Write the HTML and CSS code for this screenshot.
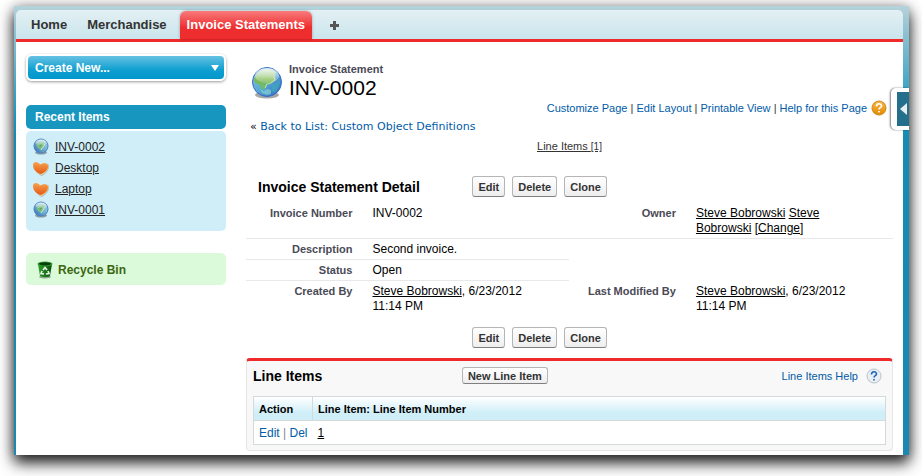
FILE: index.html
```html
<!DOCTYPE html>
<html lang="en">
<head>
<meta charset="utf-8">
<title>Invoice Statement: INV-0002</title>
<link rel="stylesheet" href="styles.css">
</head>
<body>
<svg class="defs" width="0" height="0" aria-hidden="true">
  <defs>
    <linearGradient id="sea" x1="0" y1="0" x2="1" y2="1">
      <stop offset="0" stop-color="#8fc6ea"/><stop offset=".5" stop-color="#58a8da"/><stop offset="1" stop-color="#2a62bc"/>
    </linearGradient>
    <linearGradient id="land" x1="0" y1="0" x2="0" y2="1">
      <stop offset="0" stop-color="#c2e0c0"/><stop offset=".5" stop-color="#7fba52"/><stop offset="1" stop-color="#62b890"/>
    </linearGradient>
    <linearGradient id="shine" x1="0" y1="0" x2="0" y2="1">
      <stop offset="0" stop-color="#fff" stop-opacity=".7"/><stop offset="1" stop-color="#fff" stop-opacity=".15"/>
    </linearGradient>
    <linearGradient id="small-sea" x1="0" y1="1" x2="1" y2="0">
      <stop offset="0" stop-color="#2d66b4"/><stop offset=".5" stop-color="#6fb3cf"/><stop offset="1" stop-color="#b4dbf0"/>
    </linearGradient>
    <linearGradient id="ember" x1="0" y1="0" x2="0" y2="1">
      <stop offset="0" stop-color="#f8a24a"/><stop offset="1" stop-color="#e4581a"/>
    </linearGradient>
    <linearGradient id="leaf" x1="0" y1="0" x2="1" y2="0">
      <stop offset="0" stop-color="#2fa02c"/><stop offset=".5" stop-color="#1d7a1c"/><stop offset="1" stop-color="#0d4a12"/>
    </linearGradient>
    <linearGradient id="gold" x1="0" y1="0" x2="0" y2="1">
      <stop offset="0" stop-color="#f9b84a"/><stop offset="1" stop-color="#e38a00"/>
    </linearGradient>
    <symbol id="globe" viewBox="0 0 32 34">
      <ellipse cx="16" cy="29" rx="12" ry="3.500" fill="#000" opacity=".35"/>
      <circle cx="16" cy="16" r="14.500" fill="url(#sea)" stroke="#3a6cc0"/>
      <path d="M3 14C5 7 10 3 16 3c4 0 8 2 9 4l-2 3 1 4-4 3-4 1-1 3-2 3-3-1-2-4-4-2z" fill="url(#land)"/>
      <path d="M24 9l-1 2 1 3-4 3-4 1-2 4" fill="none" stroke="#d4ee8c" stroke-width="1.200" opacity=".7"/>
      <path d="M9 23l4 2 3-2 4 1v4l-4 1-5-2z" fill="#8fe0cf" opacity=".6"/>
      <path d="M22 19c3-1 5-3 7-5 0 6-2 10-6 13-3-2-3-6-1-8z" fill="#3fb0b8" opacity=".6"/>
      <ellipse cx="16" cy="9.500" rx="12" ry="7.500" fill="url(#shine)"/>
    </symbol>
    <symbol id="globe-small" viewBox="0 0 16 17">
      <ellipse cx="8" cy="14.500" rx="6" ry="2" fill="#000" opacity=".35"/>
      <circle cx="8" cy="8" r="7" fill="url(#small-sea)" stroke="#4a7fc4"/>
      <path d="M3 7l3-3 4-1 2 3-2 3-2 3-3-2z" fill="#7cbd86"/>
      <path d="M12 6l-2 3-2 3" fill="none" stroke="#e6f5dc" opacity=".8"/>
      <path d="M6 7l3-1-1 3z" fill="#4f9f48"/>
      <ellipse cx="8" cy="4.500" rx="5.500" ry="3" fill="url(#shine)"/>
    </symbol>
    <symbol id="heart" viewBox="0 0 16 16">
      <path d="M2 6c0-3 4-3 7-1 2-2 7-2 7 1 0 5-3 7-7 10-4-1-7-5-7-10z" fill="#777" opacity=".4"/>
      <path d="M1 5c0-3 4-3 7 0 2-2 7-2 7.500 1 0 4-3 6-7 9C5 14 1 10 1 5z" fill="#f6cf78"/>
      <path d="M0 5c0-4 5-4 7 0 3-3 8-2 8 1 0 4-3 6-7 8C4 13 0 10 0 5z" fill="url(#ember)"/>
    </symbol>
    <symbol id="bin" viewBox="0 0 16 18">
      <ellipse cx="8" cy="16" rx="6" ry="1.500" fill="#000" opacity=".35"/>
      <path d="M1 3h14l-2 12c-2 1.300-8 1.300-10 0z" fill="url(#leaf)"/>
      <ellipse cx="8" cy="3" rx="7.500" ry="2.400" fill="#2b9b2b"/>
      <ellipse cx="8" cy="2.800" rx="6" ry="1.600" fill="#0b3c10"/>
      <path d="M6 9l2-2.500L10 9M11 10l1 2.500-3 .5M7 13l-3-.5L5 10" fill="none" stroke="#e9f5e6" stroke-width="1.700"/>
    </symbol>
  </defs>
</svg>

<div class="window">
  <nav class="tabs">
    <a href="#home">Home</a>
    <a href="#merchandise">Merchandise</a>
    <a href="#invoices" class="active">Invoice Statements</a>
    <a href="#all" class="plus" aria-label="All tabs"><svg width="9" height="9" viewBox="0 0 9 9"><path d="M3 0h3v3h3v3H6v3H3V6H0V3h3z" fill="#555"/></svg></a>
  </nav>

  <div class="columns">
    <aside class="sidebar">
      <button type="button" class="create">Create New...<svg width="8" height="6" viewBox="0 0 8 6"><path d="M0 0h8L4 6z" fill="#fff"/></svg></button>
      <section class="recent">
        <h2>Recent Items</h2>
        <ul>
          <li><svg width="16" height="17"><use href="#globe-small"/></svg><a href="#inv2">INV-0002</a></li>
          <li><svg width="16" height="16"><use href="#heart"/></svg><a href="#desktop">Desktop</a></li>
          <li><svg width="16" height="16"><use href="#heart"/></svg><a href="#laptop">Laptop</a></li>
          <li><svg width="16" height="17"><use href="#globe-small"/></svg><a href="#inv1">INV-0001</a></li>
        </ul>
      </section>
      <a href="#bin" class="recycle"><svg width="16" height="18"><use href="#bin"/></svg>Recycle Bin</a>
    </aside>

    <main class="main">
      <header class="heading">
        <svg width="32" height="34"><use href="#globe"/></svg>
        <div>
          <p>Invoice Statement</p>
          <h1>INV-0002</h1>
        </div>
      </header>
      <div class="page-links">
        <span><a href="#customize">Customize Page</a> | <a href="#layout">Edit Layout</a> | <a href="#print">Printable View</a> | <a href="#help">Help for this Page</a></span>
        <svg width="16" height="16" viewBox="0 0 16 16"><circle cx="8" cy="8" r="7" fill="url(#gold)" stroke="#c98820"/><path d="M5.500 6.500c0-3.500 5-3.500 5-.5 0 1.700-2.500 1.700-2.500 3.500M8 11v1.600" fill="none" stroke="#fff" stroke-width="1.600"/></svg>
      </div>
      <p class="back">« <a href="#list">Back to List: Custom Object Definitions</a></p>
      <p class="jump"><a href="#line-items">Line Items <small>[1]</small></a></p>

      <section class="detail">
        <div class="bar">
          <h2>Invoice Statement Detail</h2>
          <div class="buttons"><button type="button">Edit</button><button type="button">Delete</button><button type="button">Clone</button></div>
        </div>
        <table class="fields">
          <tr class="full"><th scope="row">Invoice Number</th><td>INV-0002</td><th scope="row">Owner</th><td><a href="#u">Steve Bobrowski</a> <a href="#u">Steve Bobrowski</a> <a href="#change">[Change]</a></td></tr>
          <tr class="half"><th scope="row">Description</th><td>Second invoice.</td><td></td><td></td></tr>
          <tr class="half"><th scope="row">Status</th><td>Open</td><td></td><td></td></tr>
          <tr><th scope="row">Created By</th><td><a href="#u">Steve Bobrowski</a>, 6/23/2012 11:14 PM</td><th scope="row">Last Modified By</th><td><a href="#u">Steve Bobrowski</a>, 6/23/2012 11:14 PM</td></tr>
        </table>
        <div class="bar">
          <div class="buttons"><button type="button">Edit</button><button type="button">Delete</button><button type="button">Clone</button></div>
        </div>
      </section>

      <section class="related" id="line-items">
        <div class="related-bar">
          <h2>Line Items</h2>
          <button type="button">New Line Item</button>
          <a href="#line-help">Line Items Help <svg width="16" height="16" viewBox="0 0 16 16"><circle cx="8" cy="8" r="7" fill="#e9eef3" stroke="#bcc3ca"/><path d="M5.500 6.500c0-3.500 5-3.500 5-.5 0 1.700-2.500 1.700-2.500 3.500M8 11v1.600" fill="none" stroke="#1a66b8" stroke-width="1.600"/></svg></a>
        </div>
        <table class="items">
          <thead><tr><th scope="col" class="action">Action</th><th scope="col">Line Item: Line Item Number</th></tr></thead>
          <tbody><tr><td class="action"><a href="#edit">Edit</a> | <a href="#del">Del</a></td><td><a href="#item1" class="record">1</a></td></tr></tbody>
        </table>
      </section>
    </main>
  </div>

  <button type="button" class="handle" aria-label="Open side panel"><svg width="7" height="12" viewBox="0 0 7 12"><path d="M7 0v12L0 6z" fill="#e8eef0"/></svg></button>
</div>
</body>
</html>
```
FILE: styles.css
```css
* {
  box-sizing: border-box;
}

body {
  margin: 0;
  padding: 6px 13px 21px 14px;
  background: #fff;
  color: #000;
  font: 12px/14px "Liberation Sans", Arial, sans-serif;
}

h1, h2, p, ul {
  margin: 0;
  padding: 0;
}

a {
  color: #015ba7;
  text-decoration: none;
}

svg {
  flex: none;
  display: block;
}

.defs {
  position: absolute;
}

.window {
  position: relative;
  min-height: calc(100vh - 27px);
  padding: 4px 6px 0 2px;
  background: linear-gradient(#b5d3dc 0, #a3c9d5 12px, #1797c0 110px, #158bb3 130px, #1a88b0 100%);
  box-shadow: 0 8px 14px rgba(0, 0, 0, .85), 0 0 12px rgba(0, 0, 0, .3);
  clip-path: inset(-6px -13px -21px -14px);
}

.tabs {
  display: flex;
  align-items: flex-end;
  height: 32px;
  padding-left: 5px;
  border-bottom: 3px solid #ee2a2b;
  border-radius: 5px 5px 0 0;
  background: linear-gradient(#e3f0f4, #cae5ec);
}

.tabs a {
  display: flex;
  align-items: center;
  height: 28px;
  padding: 0 10px;
  color: #333;
  font-size: 13px;
  font-weight: bold;
}

.tabs .active {
  padding: 0 7px;
  margin: 0 8px 0 3px;
  border-radius: 6px 6px 0 0;
  background: linear-gradient(#f87b7c, #ee2d2e 60%);
  box-shadow: 0 0 3px rgba(0, 0, 0, .3);
  color: #fff;
}

.columns {
  display: flex;
  gap: 20px;
  min-height: calc(100vh - 63px);
  padding: 12px 10px 4px;
  background: #fff;
}

.sidebar {
  flex: 0 0 200px;
}

.create {
  display: flex;
  align-items: center;
  justify-content: space-between;
  width: 100%;
  height: 27px;
  padding: 0 5px 0 7px;
  border: 2px solid #fff;
  border-radius: 6px;
  background: linear-gradient(#66c2e3, #0f9fd0 60%, #0297cb);
  box-shadow: 0 1px 3px rgba(0, 0, 0, .4);
  color: #fff;
  font: bold 12px/14px "Liberation Sans", Arial, sans-serif;
}

.recent {
  margin: 24px 0 22px;
}

.recent h2 {
  padding: 5px 9px;
  border-radius: 5px;
  background: #1797c0;
  color: #fff;
  font-size: 12px;
  line-height: 14px;
}

.recent ul {
  height: 100px;
  margin-top: 2px;
  padding: 5px 7px;
  border-radius: 5px;
  background: #cfeef8;
  list-style: none;
}

.recent li {
  display: flex;
  align-items: center;
  gap: 6px;
  height: 21px;
}

.recent li a {
  color: #222;
  text-decoration: underline;
}

.recycle {
  display: flex;
  align-items: center;
  gap: 5px;
  height: 32px;
  padding: 2px 11px 0;
  border-radius: 5px;
  background: #dafada;
  color: #3c6610;
  font-weight: bold;
}

.main {
  flex: 1;
  min-width: 0;
}

.heading {
  display: flex;
  gap: 6px;
  height: 46px;
  padding: 8px 5px 0;
}

.heading svg {
  margin-top: 4px;
}

.heading p {
  color: #4a4a56;
  font-size: 11px;
  font-weight: bold;
}

.heading h1 {
  font-size: 21px;
  font-weight: normal;
  line-height: 24px;
}

.page-links {
  display: flex;
  align-items: center;
  justify-content: flex-end;
  gap: 4px;
  height: 16px;
  padding-right: 6px;
  color: #333;
  font-size: 11px;
}

.back {
  padding: 4px 4px 5px;
  font: 11px/14px "DejaVu Sans", Verdana, sans-serif;
}

.jump {
  font-size: 11px;
  text-align: center;
}

.jump a {
  color: #333;
  text-decoration: underline;
}

.jump small {
  font-size: 10px;
}

.detail {
  padding-top: 22px;
}

.bar {
  display: grid;
  grid-template-columns: 35% 1fr;
  align-items: center;
  height: 21px;
}

.bar h2 {
  padding-left: 12px;
  font-size: 14px;
}

.buttons {
  display: flex;
  grid-column: 2;
  gap: 7px;
}

.buttons button,
.related-bar button {
  height: 21px;
  padding: 0 5px;
  border: 1px solid #b5b5b5;
  border-bottom-color: #7f7f7f;
  border-radius: 3px;
  background: linear-gradient(#fff, #eee);
  color: #333;
  font: bold 11px/14px "Liberation Sans", Arial, sans-serif;
}

.fields {
  width: 100%;
  margin: 6px 0 11px;
  border-collapse: collapse;
  table-layout: fixed;
  line-height: 15px;
}

.fields th,
.fields td {
  padding: 3px 10px 2px;
  text-align: left;
  vertical-align: top;
}

.fields th {
  width: 18%;
  color: #4a4a56;
  font-size: 11px;
  text-align: right;
}

.fields td {
  width: 32%;
  padding-right: 30px;
}

.fields td a {
  color: #000;
  text-decoration: underline;
}

.full > *,
.half > :nth-child(-n+2) {
  border-bottom: 1px solid #e8e8ea;
}

.related {
  margin-top: 10px;
  padding: 0 6px 5px;
  border: 1px solid #e6e6e6;
  border-top: 3px solid #ee2a2b;
  border-radius: 4px;
  background: #f8f8f8;
}

.related-bar {
  display: grid;
  grid-template-columns: 33% auto 1fr;
  align-items: center;
  height: 35px;
  padding-bottom: 6px;
}

.related-bar h2 {
  font-size: 14px;
}

.related-bar button {
  height: 17px;
}

.related-bar a {
  display: flex;
  align-items: center;
  justify-content: flex-end;
  gap: 8px;
  padding-right: 4px;
  font-size: 11px;
}

.items {
  width: 100%;
  border: 1px solid #d4dadc;
  border-collapse: collapse;
  background: #fff;
}

.items th,
.items td {
  height: 24px;
  padding: 0 5px;
  text-align: left;
}

.items thead tr {
  border-bottom: 1px solid #d4dadc;
  background: linear-gradient(#fff, #cfeef8 70%);
}

.items th {
  border-right: 1px solid #d4dadc;
  font-size: 11px;
}

.items .action {
  width: 59px;
  color: #888;
  white-space: nowrap;
}

.items th.action {
  color: #000;
}

.items .record {
  color: #000;
  text-decoration: underline;
}

.handle {
  position: absolute;
  top: 82px;
  right: 0;
  display: flex;
  align-items: center;
  justify-content: flex-end;
  width: 18px;
  height: 42px;
  padding: 0 2px 0 0;
  border: 4px solid #fff;
  border-width: 4px 0 4px 6px;
  border-radius: 5px 0 0 5px;
  background: #236f8c;
  box-shadow: -1px 0 2px rgba(0, 0, 0, .5);
}
```
